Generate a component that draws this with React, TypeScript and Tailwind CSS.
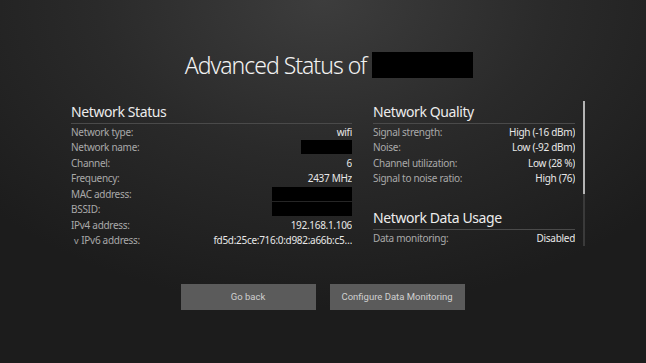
import React from 'react';

const STATUS: Array<{ label: string; value?: string; redact?: number; caret?: boolean }> = [
  { label: 'Network type:', value: 'wifi' },
  { label: 'Network name:', redact: 54 },
  { label: 'Channel:', value: '6' },
  { label: 'Frequency:', value: '2437 MHz' },
  { label: 'MAC address:', redact: 83 },
  { label: 'BSSID:', redact: 83 },
  { label: 'IPv4 address:', value: '192.168.1.106' },
  { label: 'IPv6 address:', value: 'fd5d:25ce:716:0:d982:a66b:c5…', caret: true },
];

const QUALITY = [
  { label: 'Signal strength:', value: 'High (-16 dBm)' },
  { label: 'Noise:', value: 'Low (-92 dBm)' },
  { label: 'Channel utilization:', value: 'Low (28 %)' },
  { label: 'Signal to noise ratio:', value: 'High (76)' },
];

function Heading({ children }: { children: React.ReactNode }) {
  return (
    <div className="h-[25px] flex items-center border-b border-[#4a4a4a] text-[14px] font-normal text-[#ececec] tracking-[-0.4px]">
      {children}
    </div>
  );
}

function Row({ label, value, redact, caret }: { label: string; value?: string; redact?: number; caret?: boolean }) {
  return (
    <div className="h-[15.5px] flex items-center justify-between text-[10px] leading-none tracking-[-0.3px]">
      <span className="text-[#a9a9a9]">
        {caret && <span className="ml-[3px] mr-[3px] text-[9px]">v</span>}
        {label}
      </span>
      {redact ? (
        <span className="bg-black h-[14px] -mr-[3px]" style={{ width: redact }} />
      ) : (
        <span className="text-[#e8e8e8]">{value}</span>
      )}
    </div>
  );
}

export default function App() {
  return (
    <div
      className="w-[646px] h-[363px] overflow-hidden flex flex-col bg-[radial-gradient(ellipse_70%_85%_at_50%_0%,#3d3d3d_0%,#2a2a2a_50%,#1c1c1c_100%)]"
      style={{ fontFamily: '"Noto Sans", "Open Sans", sans-serif' }}
    >
      <div className="pt-[52px] flex items-center justify-center gap-[6px] pl-[12px]">
        <span className="text-[23px] font-light text-[#f2f2f2] tracking-[-1px] leading-none">Advanced Status of</span>
        <span className="w-[101px] h-[26px] bg-black" />
      </div>

      <div className="mt-[21px] pl-[71px] flex h-[147px]">
        <div className="w-[281px] overflow-hidden">
          <Heading>Network Status</Heading>
          {STATUS.map((r) => (
            <Row key={r.label} {...r} />
          ))}
        </div>
        <div className="ml-[21px] w-[202px] overflow-hidden">
          <Heading>Network Quality</Heading>
          {QUALITY.map((r) => (
            <Row key={r.label} {...r} />
          ))}
          <div className="mt-[19px]">
            <Heading>Network Data Usage</Heading>
          </div>
          <Row label="Data monitoring:" value="Disabled" />
        </div>
        <div className="ml-[8px] mt-[2px] w-[2px] flex flex-col">
          <div className="h-[93px] bg-[#b4b4b4]" />
          <div className="flex-1 bg-[#3a3a3a]" />
        </div>
      </div>

      <div className="mt-[38px] flex justify-center gap-[14px] pr-[1px]" style={{ fontFamily: 'Roboto, sans-serif' }}>
        <button className="w-[135px] h-[26px] bg-[#5b5b5b] text-[9.5px] text-[#cfcfcf]">Go back</button>
        <button className="w-[135px] h-[26px] bg-[#5b5b5b] text-[9.5px] text-[#cfcfcf]">Configure Data Monitoring</button>
      </div>
    </div>
  );
}
